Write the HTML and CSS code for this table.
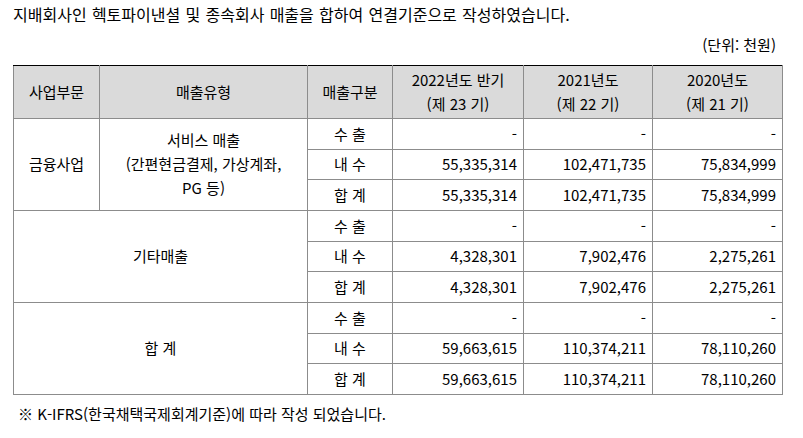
FILE: index.html
```html
<!DOCTYPE html>
<html lang="ko">
<head>
<meta charset="utf-8">
<link rel="stylesheet" href="styles.css">
</head>
<body>
<div class="page">
  <p class="title">지배회사인 헥토파이낸셜 및 종속회사 매출을 합하여 연결기준으로 작성하였습니다.</p>
  <p class="unit">(단위: 천원)</p>
  <table class="sales">
    <colgroup>
      <col class="c1"><col class="c2"><col class="c3"><col class="c4"><col class="c5"><col class="c6">
    </colgroup>
    <thead>
      <tr>
        <th>사업부문</th>
        <th>매출유형</th>
        <th>매출구분</th>
        <th>2022년도 반기<br>(제 23 기)</th>
        <th>2021년도<br>(제 22 기)</th>
        <th>2020년도<br>(제 21 기)</th>
      </tr>
    </thead>
    <tbody>
      <tr>
        <td rowspan="3" class="ctr">금융사업</td>
        <td rowspan="3" class="ctr multi">서비스 매출<br>(간편현금결제, 가상계좌,<br>PG 등)</td>
        <td class="ctr">수 출</td>
        <td class="num">-</td><td class="num">-</td><td class="num">-</td>
      </tr>
      <tr>
        <td class="ctr">내 수</td>
        <td class="num">55,335,314</td><td class="num">102,471,735</td><td class="num">75,834,999</td>
      </tr>
      <tr>
        <td class="ctr">합 계</td>
        <td class="num">55,335,314</td><td class="num">102,471,735</td><td class="num">75,834,999</td>
      </tr>
      <tr>
        <td rowspan="3" colspan="2" class="ctr">기타매출</td>
        <td class="ctr">수 출</td>
        <td class="num">-</td><td class="num">-</td><td class="num">-</td>
      </tr>
      <tr>
        <td class="ctr">내 수</td>
        <td class="num">4,328,301</td><td class="num">7,902,476</td><td class="num">2,275,261</td>
      </tr>
      <tr>
        <td class="ctr">합 계</td>
        <td class="num">4,328,301</td><td class="num">7,902,476</td><td class="num">2,275,261</td>
      </tr>
      <tr>
        <td rowspan="3" colspan="2" class="ctr">합 계</td>
        <td class="ctr">수 출</td>
        <td class="num">-</td><td class="num">-</td><td class="num">-</td>
      </tr>
      <tr>
        <td class="ctr">내 수</td>
        <td class="num">59,663,615</td><td class="num">110,374,211</td><td class="num">78,110,260</td>
      </tr>
      <tr>
        <td class="ctr">합 계</td>
        <td class="num">59,663,615</td><td class="num">110,374,211</td><td class="num">78,110,260</td>
      </tr>
    </tbody>
  </table>
  <p class="note">※ K-IFRS(한국채택국제회계기준)에 따라 작성 되었습니다.</p>
</div>
</body>
</html>
```

FILE: styles.css
```css
html, body {
  margin: 0;
  padding: 0;
  background: #ffffff;
}

body {
  font-family: "Noto Sans CJK KR", "Noto Sans", sans-serif;
  font-size: 15px;
  color: #000000;
}

.page {
  padding: 0 21px 0 13px;
}

.title {
  margin: 0;
  font-size: 16px;
  line-height: 28px;
  word-spacing: 0.8px;
}

.unit {
  margin: 7px 0 0 0;
  line-height: 20px;
  text-align: right;
  padding-right: 6px;
}

.sales {
  margin-top: 10px;
  border-collapse: collapse;
  table-layout: fixed;
  width: 769px;
  border: 1px solid #000000;
}

.c1 { width: 86px; }
.c2 { width: 208px; }
.c3 { width: 85px; }
.c4 { width: 131px; }
.c5 { width: 129px; }
.c6 { width: 130px; }

.sales th,
.sales td {
  border: 1px solid #8c8c8c;
  padding: 0 6px;
  vertical-align: middle;
  line-height: 24px;
  font-weight: normal;
}

.sales th {
  background: #dadada;
  height: 52px;
  text-align: center;
}

.sales thead tr th {
  border-top: 1px solid #000000;
}

.sales td {
  height: 29.67px;
}

.ctr {
  text-align: center;
}

.multi {
  line-height: 30px;
}

.num {
  text-align: right;
}

.note {
  margin: 8px 0 0 5px;
  line-height: 22px;
}
```
